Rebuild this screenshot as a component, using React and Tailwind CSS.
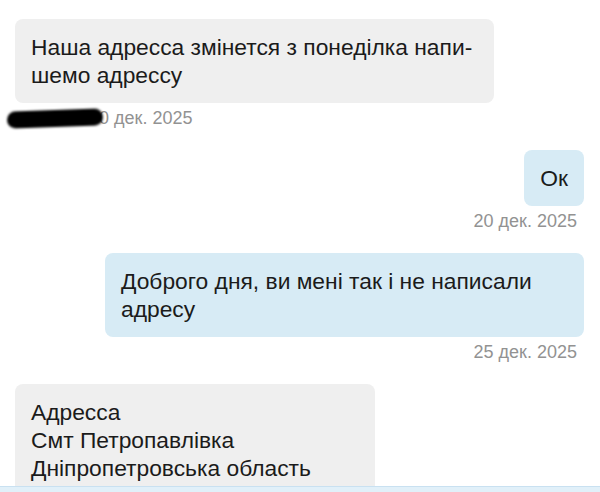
const messages = [
  {
    side: "left",
    lines: ["Наша адресса змінется з понеділка напи-", "шемо адрессу"],
    time: "0 дек. 2025",
    redacted: true,
    width: "w-[479px]",
  },
  { side: "right", lines: ["Ок"], time: "20 дек. 2025" },
  {
    side: "right",
    lines: ["Доброго дня, ви мені так і не написали", "адресу"],
    time: "25 дек. 2025",
    width: "w-[479px]",
  },
  {
    side: "left",
    lines: ["Адресса", "Смт Петропавлівка", "Дніпропетровська область"],
    width: "w-[360px] min-h-[130px]",
  },
];

const Bubble = ({ msg }) => {
  const isRight = msg.side === "right";
  return (
    <div className={`flex flex-col ${isRight ? "items-end" : "items-start"}`}>
      <div
        className={`${msg.width || ""} rounded-lg px-4 py-[14px] text-[22.8px] leading-[28px] text-[#1b1b1b] ${
          isRight ? "bg-[#d7ebf5]" : "bg-[#efefef]"
        }`}
      >
        {msg.lines.map((line, i) => (
          <div key={i} className="whitespace-nowrap">
            {line}
          </div>
        ))}
      </div>
      {msg.time && (
        <div
          className={`mt-[5px] mb-[22px] flex items-center text-[18px] leading-[20px] text-[#929292] ${
            isRight ? "mr-[7px]" : "-ml-[8px]"
          }`}
        >
          {msg.redacted && (
            <span className="mr-[-4px] inline-block h-[17px] w-[96px] -rotate-2 rounded-full bg-black blur-[1px]" />
          )}
          <span>{msg.time}</span>
        </div>
      )}
    </div>
  );
};

export default function App() {
  return (
    <div className="flex h-[492px] w-[600px] flex-col overflow-hidden bg-white font-['Liberation_Sans',Arial,sans-serif]">
      <div className="flex-1 overflow-hidden pl-[15px] pr-[16px] pt-[19px]">
        {messages.map((m, i) => (
          <Bubble key={i} msg={m} />
        ))}
      </div>
      <div className="h-[6px] border-t border-[#c9e1f1] bg-[#e1f0f9]" />
    </div>
  );
}
